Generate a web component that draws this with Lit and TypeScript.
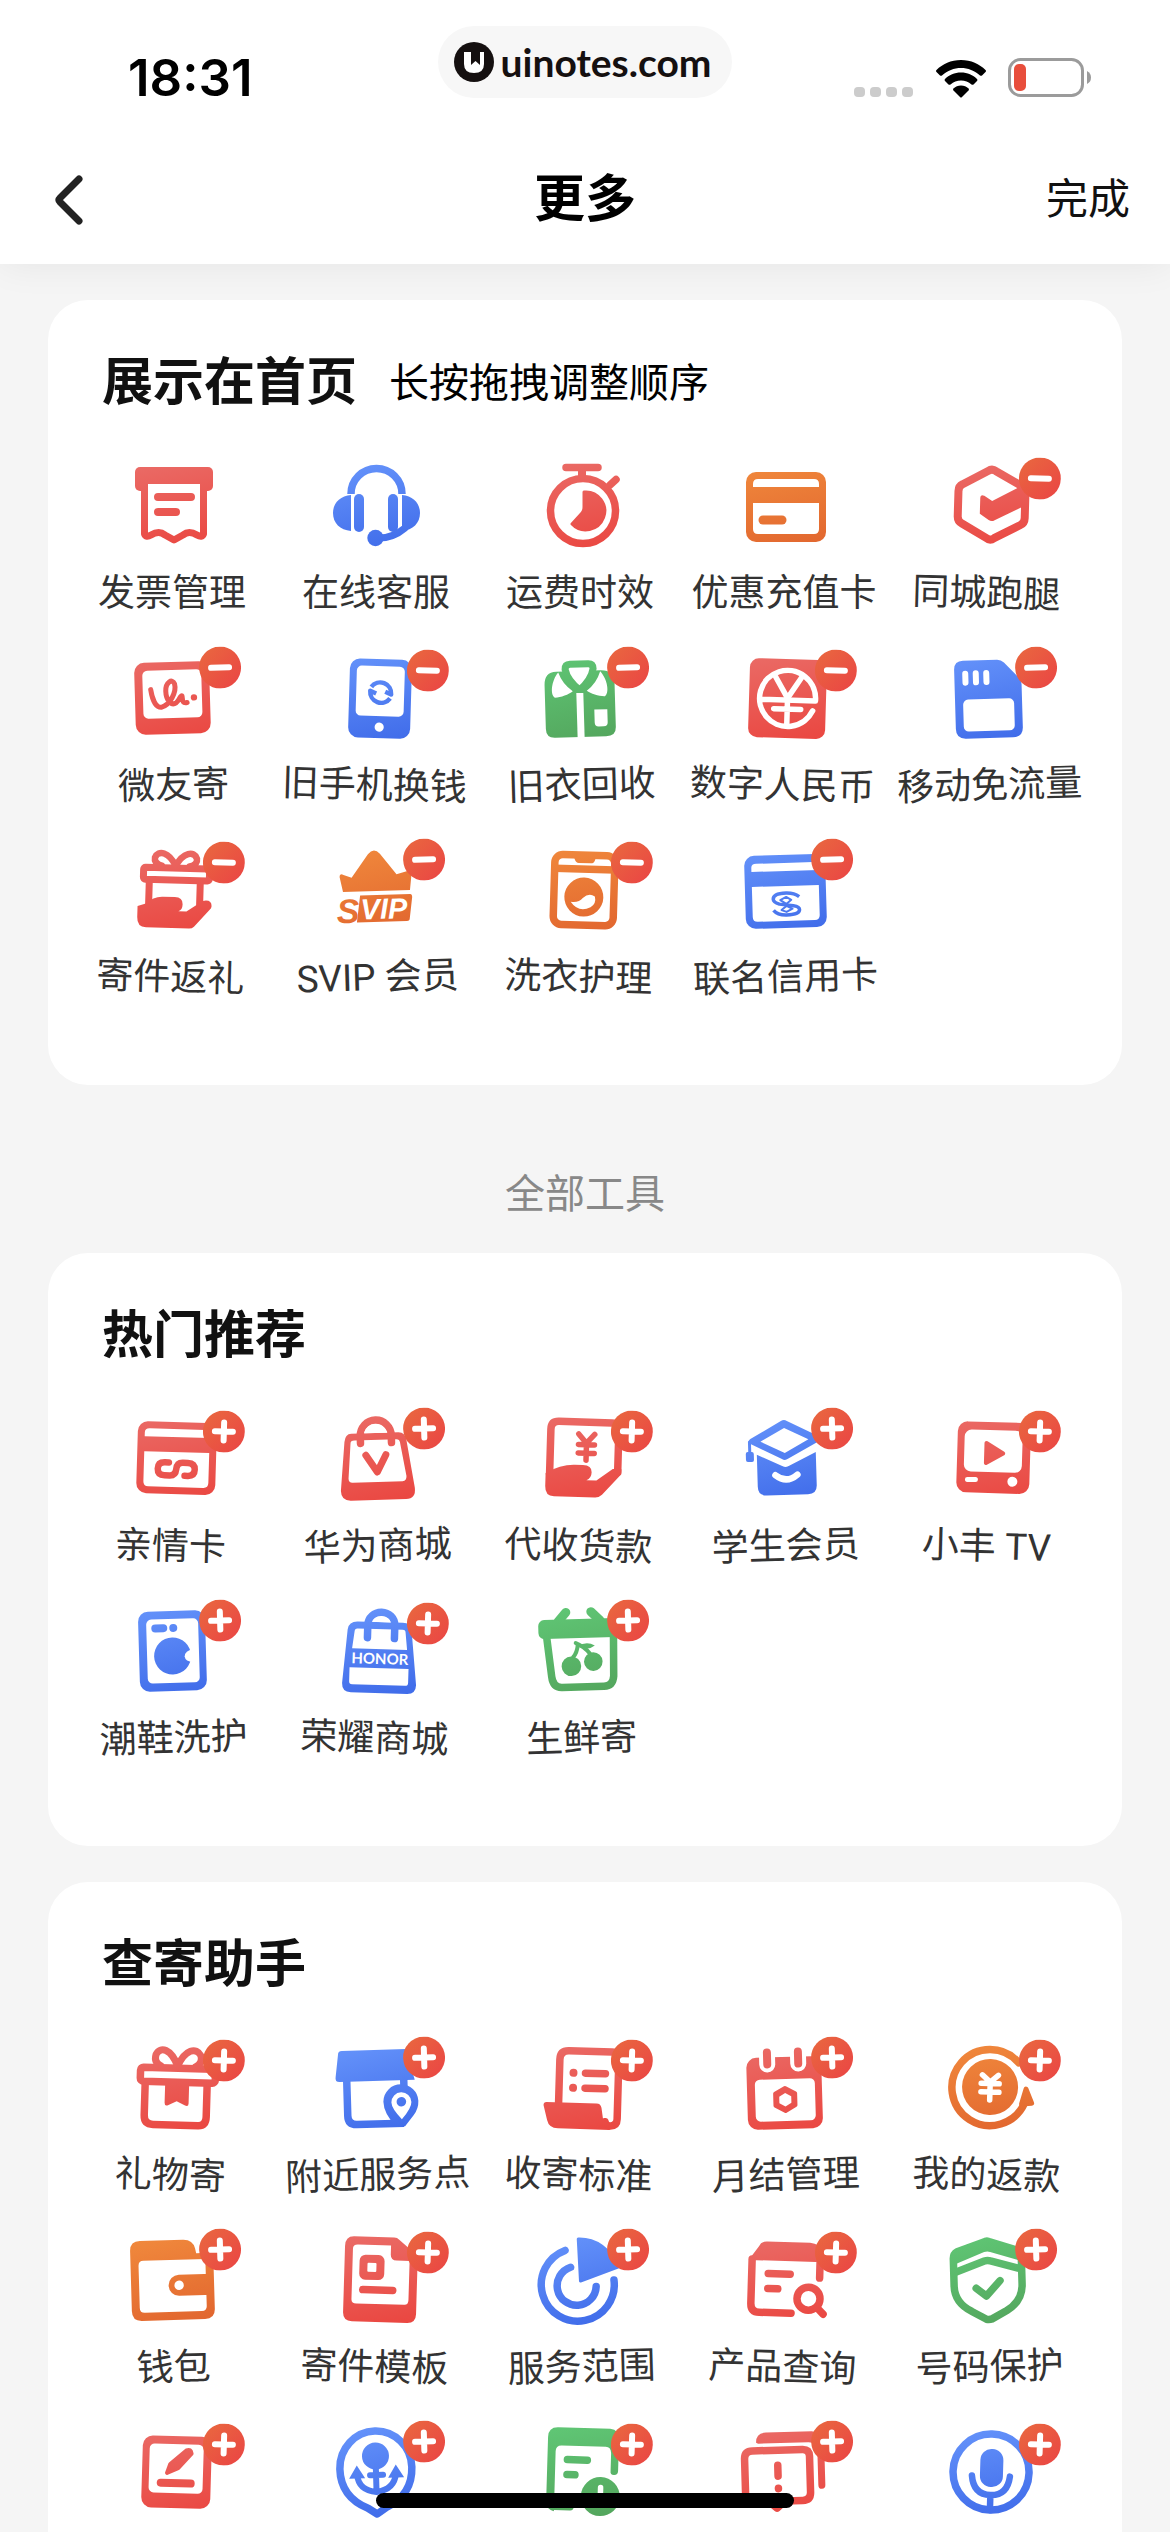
import { LitElement, html, svg, css, TemplateResult, SVGTemplateResult } from "lit";
import { customElement, property } from "lit/decorators.js";
import { classMap } from "lit/directives/class-map.js";

type Tone = "red" | "blue" | "orange" | "green";
type Mode = "fixed" | "remove" | "add";

interface Tool {
  name: string;
  tone: Tone;
  icon: string;
  mode: Mode;
  unlabelled?: boolean;
}

const TONES: Record<Tone, [string, string]> = {
  red: ["#ea6a65", "#ea4842"],
  blue: ["#6492fa", "#416dea"],
  orange: ["#f0883c", "#e2672f"],
  green: ["#5fc574", "#54a75e"],
};

/* Every icon is drawn on an 88 x 88 canvas. The canvas paints both fill and
   stroke with the tone gradient; the classes switch one of them off:
   solid = fill only, line = stroke only, paper = white fill, chalk = white stroke. */
const ICONS: Record<string, SVGTemplateResult> = {
  invoice: svg`
    <rect class="solid" x="7" y="5" width="78" height="24" rx="5"/>
    <rect class="paper" x="20" y="22" width="52" height="12"/>
    <path class="line" stroke-width="7" stroke-linecap="butt" d="M16.5 26V72Q18 76 23 73Q31 68 37 73L46 78L55 73Q61 68 69 73Q74 76 75.5 72V26"/>
    <path class="line" stroke-width="8" d="M30 35H63M30 50H48"/>`,
  headset: svg`
    <path class="line" stroke-width="7.5" stroke-linecap="butt" d="M19 32A25.5 25.5 0 0 1 70 32"/>
    <path class="solid" d="M19 33V69C8 68 1 61 1 51S8 34 19 33ZM70 33V69C81 68 88 61 88 51S81 34 70 33Z"/>
    <rect class="solid" x="22" y="32" width="10" height="38" rx="5"/>
    <rect class="solid" x="56" y="32" width="10" height="38" rx="5"/>
    <path class="line" stroke-width="7" d="M44 76Q60 77 73 66"/>
    <circle class="solid" cx="43.5" cy="76" r="8.2"/>`,
  stopwatch: svg`
    <circle class="line" stroke-width="7.5" cx="47" cy="49" r="32.5"/>
    <path class="line" stroke-width="7.5" d="M30 5.5H62M74 23L80 17.5"/>
    <rect class="solid" x="42" y="6" width="8" height="10"/>
    <path stroke-width="3" d="M48 30A19 19 0 1 1 36 62L46 51Q48 49 48 45Z"/>`,
  prepaid: svg`
    <rect class="solid" x="6" y="10" width="80" height="70" rx="10"/>
    <path class="paper" d="M13 25V22Q13 17 18 17H74Q79 17 79 22V25Z"/>
    <path class="paper" d="M13 41H79V67Q79 72 74 72H18Q13 72 13 67Z"/>
    <path class="line" stroke-width="9" d="M23 58H42"/>`,
  courier: svg`
    <path class="line" stroke-width="8" d="M42 9Q46 6 50 9L76 23Q80 25 80 30V55Q80 60 76 62L50 76Q46 79 42 76L17 62Q13 60 13 55V30Q13 25 17 23Z"/>
    <path class="solid" d="M35 36Q35 32 39 34L47 39L81 20V42L50 58Q47 60 44 58L35 52Z"/>`,
  sketch: svg`
    <rect class="solid" x="8" y="8" width="75" height="72" rx="10"/>
    <rect class="paper" x="16" y="16" width="59" height="48" rx="5"/>
    <path class="line" stroke-width="5" d="M24 35C25 43 28 53 34 53C43 51 50 38 48 30C46 24 39 28 39 37C39 46 44 52 49 49C53 46 53 42 55 42C56 45 54 50 60 49"/>
    <circle class="solid" cx="67" cy="44" r="3.2"/>`,
  phone: svg`
    <rect class="solid" x="16" y="5" width="62" height="79" rx="10"/>
    <rect class="paper" x="23" y="12" width="48" height="50" rx="5"/>
    <circle class="paper" cx="47" cy="73" r="4.6"/>
    <path class="line" stroke-width="4.5" stroke-linecap="butt" d="M38 33A11 11 0 0 1 58 40L52 37.5M57 44A11 11 0 0 1 37 37L43 39.5"/>`,
  shirt: svg`
    <path class="solid" d="M22 17H66Q80 17 80 30V74Q80 83 70 83H19Q10 83 10 74V30Q10 17 22 17Z"/>
    <path class="paper" d="M24 18C17 26 15 40 20 43C26 43 34 40 38 37Q28 30 24 18ZM66 18C73 26 75 40 70 43C64 43 56 40 52 37Q62 30 66 18Z"/>
    <path fill="#fff" stroke-width="7" d="M31 15Q31 10 36 10H54Q59 10 59 15Q57 26 45 36Q33 26 31 15Z"/>
    <rect class="paper" x="41.5" y="39" width="7" height="45"/>
    <path class="paper" d="M59 56H72V69Q72 73 68 73H63Q59 73 59 69Z"/>`,
  digital: svg`
    <rect class="solid" x="8" y="5" width="77" height="79" rx="9"/>
    <path class="chalk" stroke-width="5.5" d="M20 46H74.5A28 28 0 1 0 72 56"/>
    <path class="chalk" stroke-width="5.5" d="M34 23L46.5 44L60 23M46.5 44V72M33 55H60"/>`,
  sdcard: svg`
    <path class="solid" d="M21 6H55Q59 6 62 9L76 24Q79 27 79 31V74Q79 84 69 84H22Q12 84 12 74V15Q12 6 21 6Z"/>
    <path class="chalk" stroke-width="6" d="M23 19V28M33.5 19V28M44 19V28"/>
    <rect class="paper" x="20" y="45" width="51" height="32" rx="5"/>`,
  handgift: svg`
    <path class="line" stroke-width="6.5" d="M46 20C39 6 28 4 25 12Q24 18 32 20M46 20C53 6 64 4 67 12Q68 18 60 20"/>
    <rect class="line" stroke-width="7" x="14" y="22" width="66" height="12" rx="2"/>
    <path class="line" stroke-width="7" d="M20 36V60M71 36V58"/>
    <path class="solid" d="M9 61L18 58Q24 51 34 51H46Q54 51 54 58Q54 64 50 65H58L74 54Q83 52 83 59Q83 61 81 63L66 80Q64 82 61 82H18Q9 82 9 72Z"/>`,
  svip: svg`
    <path class="solid" d="M9 30Q9 26 13 28L21 31L38 8Q44 1 50 8L66 29L77 26Q82 25 81 29L79 45H12Z"/>
    <path class="solid" d="M29 49H79Q81 49 81 52L78 73Q78 76 75 76H25Z"/>
    <text class="solid mark" x="5" y="76" font-size="34">S</text>
    <text class="paper mark" x="29" y="73" font-size="29">VIP</text>`,
  laundry: svg`
    <rect class="line" stroke-width="7.5" x="17" y="9" width="60" height="70" rx="8"/>
    <path class="line" stroke-width="7.5" stroke-linecap="butt" d="M17 23H77"/>
    <path class="solid" d="M33 9Q36 10 37 14Q38 17 41 17H53Q56 17 57 14Q58 10 61 9Z"/>
    <circle class="solid" cx="47" cy="51" r="19.5"/>
    <path class="paper" d="M34 56Q42 57 46 52Q52 46 58 50Q60 57 54 61Q42 67 34 56Z"/>`,
  cobrand: svg`
    <rect class="solid" x="6" y="9" width="81" height="73" rx="10"/>
    <path class="paper" d="M13 25V21Q13 17 18 17H75Q80 17 80 21V25Z"/>
    <path class="paper" d="M13 40H80V70Q80 75 75 75H18Q13 75 13 70Z"/>
    <path class="line" stroke-width="3.5" stroke-linecap="butt" d="M60 51Q55 47 47 47Q34 47 34 53Q34 56 40 58L54 60Q60 61 60 64Q60 69 47 69Q38 69 34 64"/>
    <path class="line" stroke-width="2" d="M41 54L47 51L52 54L47 58ZM42 64L47 60L53 63L47 66Z"/>`,
  family: svg`
    <rect class="solid" x="8" y="7" width="79" height="72" rx="10"/>
    <path class="paper" d="M15 22V18Q15 14 20 14H75Q80 14 80 18V22Z"/>
    <path class="paper" d="M15 37H80V67Q80 72 75 72H20Q15 72 15 67Z"/>
    <path class="line" stroke-width="6.5" d="M40 47.5H36Q29 47.5 29 54Q29 60.5 36 60.5H41Q47 60.5 47.5 54Q48 47.5 54 47.5H59Q66 47.5 66 54Q66 60.5 59 60.5H56"/>`,
  vbag: svg`
    <path class="solid" d="M21 18H68Q75 18 76 26L83 74Q84 85 74 85H19Q9 85 9 75L14 26Q15 18 21 18Z"/>
    <path class="paper" d="M24 25H66Q69 25 69.5 28L75 62Q75 67 71 67H21Q17 67 17 63L20 28Q20 25 24 25Z"/>
    <path class="line" stroke-width="7.5" d="M30 28V21A15.5 16 0 0 1 61 21V28"/>
    <path class="paper" d="M34 18V17Q37 9 45 9T57 17V18Z"/>
    <path class="line" stroke-width="7" d="M35 40L46 57L55 40"/>`,
  collect: svg`
    <path class="line" stroke-width="7.5" d="M13 60V15Q13 7 21 7H74Q81 7 81 14V56"/>
    <path class="solid" d="M9 59Q24 50 38 50H46Q55 50 55 57Q55 63 50 65H60L76 53H84.7V58L66 79Q63 82 59 82H18Q9 82 9 72Z"/>
    <path class="line" stroke-width="5.5" d="M41 19L49 28L57 19M49 28V45M41 29.5H57M41 38H57"/>`,
  student: svg`
    <path class="solid" d="M43 6Q46 4 49 6L80 22Q82 25 79 28L49 44Q46 46 43 44L12 28Q9 25 12 23ZM22 26L46 38L70 25L46 13Z" fill-rule="evenodd"/>
    <path class="line" stroke-width="3" d="M11 26V40"/>
    <rect class="solid" x="7" y="36" width="8" height="10" rx="2"/>
    <path class="solid" d="M18 39L43 51Q47 53 50 51L77 38V71Q77 80 68 80H27Q18 80 18 71Z"/>
    <path class="chalk" stroke-width="6.5" d="M36 60Q47 69 58 60"/>`,
  tv: svg`
    <rect class="solid" x="12" y="7" width="73" height="71" rx="10"/>
    <rect class="paper" x="19" y="15" width="58" height="42" rx="7"/>
    <path stroke-width="4" d="M41 28L58 38L41 48Z"/>
    <path class="chalk" stroke-width="5" d="M23 65H31"/>
    <circle class="paper" cx="68" cy="66" r="5"/>`,
  shoewash: svg`
    <rect class="solid" x="12" y="4" width="67" height="80" rx="10"/>
    <rect class="paper" x="20" y="12" width="52" height="64" rx="5"/>
    <path class="line" stroke-width="8" d="M29 21H37"/>
    <circle class="solid" cx="47" cy="21" r="4"/>
    <circle class="solid" cx="45.5" cy="49" r="18.5"/>
    <path class="paper" d="M66 43Q58 44 57.5 50Q58 55 66 56Z"/>`,
  honor: svg`
    <path class="solid" d="M24 15H69Q77 15 78 23L84 77Q84 86 75 86H19Q10 86 10 77L14 23Q15 15 24 15Z"/>
    <path class="paper" d="M24 22H69Q72 22 72 25L74 42H19L21 25Q21 22 24 22Z"/>
    <path class="paper" d="M17 61H76V75Q76 78 73 78H20Q17 78 17 75Z"/>
    <path class="line" stroke-width="7.5" d="M34 31V18A13.5 13 0 0 1 61 18V31"/>
    <path class="paper" d="M38 15Q40 9 47.5 9T57 15Z"/>
    <text class="paper shop" x="47" y="57" font-size="15" text-anchor="middle">HONOR</text>`,
  basket: svg`
    <path class="line" stroke-width="9" d="M32 5L24 14M57 5L66 14"/>
    <rect class="solid" x="4" y="12" width="82" height="19" rx="6"/>
    <path class="line" stroke-width="7.5" stroke-linecap="butt" d="M12 28L16 69Q17 80 26 80H68Q77 80 78 70L79 28"/>
    <circle class="solid" cx="36" cy="59" r="9.8"/>
    <circle class="solid" cx="58" cy="55" r="9.3"/>
    <path class="line" stroke-width="4" d="M38 50Q42 46 43 38M55 47Q50 40 41 36"/>
    <path class="solid" d="M43 39Q52 34 60 39Q52 45 43 39Z"/>`,
  gift: svg`
    <path class="line" stroke-width="7" d="M48 22C41 5 30 2 26 11Q24 19 31 22M48 22C55 5 66 2 71 11Q73 19 66 22"/>
    <rect class="line" stroke-width="7.5" x="11" y="24" width="75" height="14" rx="3"/>
    <path class="line" stroke-width="7.5" d="M16 40V72Q16 81 25 81H70Q78 81 78 72V40"/>
    <path class="solid" d="M36 40H60V59Q60 63 56 61L48 57L40 61Q36 63 36 59Z"/>`,
  store: svg`
    <path class="line" stroke-width="7.5" stroke-linecap="butt" d="M16 34V71Q16 80 25 80H72M73 34V46"/>
    <path class="solid" d="M12 6H76L84 37H9Q4 37 5 32L8 10Q8 6 12 6Z"/>
    <path class="solid" d="M70 41A17.5 17.5 0 0 1 87 58Q87 66 82 72L73 83H64Q52 70 52 58A17.5 17.5 0 0 1 70 41Z"/>
    <path class="paper" d="M70 49A10 10 0 0 1 80 59Q80 65 70 76Q60 65 60 59A10 10 0 0 1 70 49Z"/>
    <circle class="solid" cx="70" cy="58.5" r="4.8"/>`,
  standard: svg`
    <path class="line" stroke-width="7.5" d="M22 60V16Q22 7 31 7H74Q81 7 81 14V74Q81 81 74 81Q70 81 69 77"/>
    <path class="solid" d="M7 62Q7 59 10 59H60Q64 59 65 63L67 75Q68 80 74 81V85H22Q13 85 11 77Z"/>
    <circle class="solid" cx="36" cy="29" r="4"/>
    <circle class="solid" cx="36" cy="44" r="4"/>
    <path class="line" stroke-width="7.5" d="M48 29H68M48 44H68"/>`,
  calendar: svg`
    <rect class="solid" x="8" y="13" width="75" height="72" rx="10"/>
    <rect class="paper" x="16" y="35" width="60" height="42" rx="5"/>
    <path class="chalk" stroke-width="16" d="M29 7V20M60 7V20"/>
    <path class="line" stroke-width="8" d="M29 8V20M60 8V20"/>
    <path stroke-width="4" d="M46 44L56 49.5V61.5L46 67L36 61.5V49.5Z"/>
    <path class="paper" d="M46 49L52 52.5V59L46 62.5L40 59V52.5Z"/>`,
  refund: svg`
    <path class="line" stroke-width="7.5" d="M73 18A38 38 0 1 0 80 58"/>
    <path stroke-width="5" d="M81 44L87 58L77 59Z"/>
    <circle class="solid" cx="45" cy="43" r="28"/>
    <path class="chalk" stroke-width="5.5" d="M37 31L45 38L53 31M45 38V56M36 39.5H54M36 48H54"/>`,
  wallet: svg`
    <path class="solid" d="M14 4H57Q67 4 69 13L70 18H77Q87 19 87 29V74Q87 84 77 84H14Q4 84 4 74V14Q4 4 14 4Z"/>
    <path class="paper" d="M17 24H79V71Q79 76 74 76H17Q12 76 12 71V29Q12 24 17 24Z"/>
    <path class="solid" d="M86 39H52A10.5 10.5 0 0 0 52 60H86Z"/>
    <circle class="paper" cx="52" cy="49.5" r="4.7"/>`,
  template: svg`
    <path class="solid" d="M20 1H60Q63 1 65 3L82 17Q84 19 84 22V77Q84 86 75 86H20Q11 86 11 77V11Q11 1 20 1Z"/>
    <path class="paper" d="M24 9H57V18Q57 24 63 24H76V63Q76 68 72 68H24Q19 68 19 64V13Q19 9 24 9Z"/>
    <rect class="solid" x="26" y="19" width="25" height="25" rx="6"/>
    <rect class="paper" x="34" y="27" width="9" height="9" rx="1"/>
    <path class="line" stroke-width="7.5" d="M30 54H60"/>`,
  range: svg`
    <path stroke-width="3" d="M44.5 3Q70 3 84 32L45.5 45Z"/>
    <path class="line" stroke-width="7.5" d="M31 14A36.5 36.5 0 1 0 79 45"/>
    <path class="line" stroke-width="7.5" d="M36 31A19.5 19.5 0 1 0 61 51"/>`,
  query: svg`
    <path class="solid" d="M17 11Q19 6 25 6H68Q78 7 80 13L82 25H7Z"/>
    <path class="line" stroke-width="7.5" d="M10.5 24V68Q10.5 77 19 77H51M78.5 22V41"/>
    <path class="line" stroke-width="7.5" d="M27 38H49M27 53H37"/>
    <circle class="line" stroke-width="7.5" cx="68" cy="62" r="11.5"/>
    <path class="line" stroke-width="7.5" d="M77 71L83 77"/>`,
  shield: svg`
    <path class="line" stroke-width="7.5" d="M42 6Q45 4 48 6L75 15Q79 17 79 22V49Q79 66 63 75L48 83Q45 84 42 83L28 75Q11 66 11 49V22Q11 17 15 15Z"/>
    <path class="solid" d="M11 18L45 4L79 18V26L48 16Q45 15 42 16L11 28Z"/>
    <path class="line" stroke-width="7.5" stroke-linecap="butt" d="M11 36L42 25Q45 24 48 25L79 34"/>
    <path class="line" stroke-width="7.5" d="M33 52L43 60L57 45"/>`,
  edit: svg`
    <rect class="solid" x="13" y="8" width="69" height="72" rx="10"/>
    <rect class="paper" x="20" y="16" width="54" height="49" rx="5"/>
    <path stroke-width="4" d="M57 22Q61 20 62 25L49 40L38 45L41 36Z"/>
    <path class="line" stroke-width="8" d="M32 55H62"/>`,
  port: svg`
    <path class="line" stroke-width="7.5" d="M36 80Q9 68 9 40A36 37 0 0 1 81 40Q81 68 54 80L45 86Z"/>
    <circle class="solid" cx="45" cy="28" r="13.5"/>
    <path class="line" stroke-width="6" d="M45 36V62M39 47H52M26 46Q27 62 45 64Q63 62 65 46"/>
    <path class="solid" d="M26 37L34 50H18ZM65 37L73 50H57Z"/>`,
  record: svg`
    <path class="solid" d="M20 0H72Q81 1 81 10V42Q81 46 77 46T73.5 42V24Q73 18 68 18H24Q18 18 18 24V84Q10 82 10 75V10Q10 0 20 0Z"/>
    <path class="line" stroke-width="7.5" d="M30 32H50M30 47H38M18 79H34"/>
    <circle class="solid" cx="64" cy="68" r="19.5"/>
    <path class="chalk" stroke-width="5.5" d="M64 59V69H70"/>`,
  alert: svg`
    <path class="solid" d="M18 14Q18 4 28 4H74Q84 5 86 16V58Q86 62 82.5 62T79 58V24Q79 15 70 15H20Z"/>
    <path class="line" stroke-width="7.5" d="M14 22H64Q71 22 71 29V65Q71 73 63 73H45L37 80L29 73H14Q6 73 6 65V30Q6 22 14 22Z"/>
    <path class="line" stroke-width="7.5" d="M39 37V48M39 60V60.5"/>`,
  voice: svg`
    <circle class="line" stroke-width="7.5" cx="46" cy="44" r="38"/>
    <rect class="solid" x="35" y="21" width="23" height="38" rx="11"/>
    <path class="line" stroke-width="6.5" d="M27 48Q29 67 46 67T65 48M46 68V82"/>`,
};

@customElement("tool-tile")
class ToolTile extends LitElement {
  @property({ attribute: false }) tool!: Tool;
  @property({ type: Boolean }) tilted = false;
  @property({ type: Boolean }) counter = false;

  static styles = css`
    :host {
      display: block;
    }
    .tile {
      width: 100%;
      display: flex;
      flex-direction: column;
      align-items: center;
      gap: 18px;
      padding: 0;
      border: 0;
      background: none;
      color: #333;
      font-family: Roboto, "Noto Sans CJK SC", sans-serif;
      font-size: 37px;
      line-height: 52px;
      white-space: nowrap;
      cursor: pointer;
    }
    .tilted {
      transform: rotate(1.7deg);
    }
    .counter {
      transform: rotate(-1.7deg);
    }
    .art {
      position: relative;
      width: 88px;
      height: 88px;
    }
    .icon {
      display: block;
      width: 88px;
      height: 88px;
      overflow: visible;
    }
    .badge {
      position: absolute;
      left: 73px;
      top: -6px;
      width: 42px;
      height: 42px;
    }
    .label {
      height: 52px;
    }
    .solid {
      stroke: none;
    }
    .line {
      fill: none;
    }
    .paper {
      fill: #fff;
      stroke: none;
    }
    .chalk {
      fill: none;
      stroke: #fff;
    }
    .mark {
      font-family: "Liberation Sans Narrow", "Liberation Sans", sans-serif;
      font-weight: 700;
      font-style: italic;
    }
    .shop {
      font-family: Lato, sans-serif;
      font-weight: 700;
    }
  `;

  private badge(mode: Mode): TemplateResult | string {
    if (mode === "fixed") return "";
    return html`<svg class="badge" viewBox="0 0 42 42" aria-hidden="true">
      <defs>
        <linearGradient id="dot" x1="0" y1="0" x2="1" y2="1">
          <stop offset="0" stop-color="#e9693f"></stop>
          <stop offset="1" stop-color="#ea4444"></stop>
        </linearGradient>
      </defs>
      <circle cx="21" cy="21" r="21" fill="url(#dot)"></circle>
      <path
        d=${mode === "add" ? "M12 21H30M21 12V30" : "M12 21H30"}
        stroke="#fff"
        stroke-width="6"
        stroke-linecap="round"
      ></path>
    </svg>`;
  }

  render() {
    const { name, tone, icon, mode, unlabelled } = this.tool;
    const [from, to] = TONES[tone];
    return html`<button
      type="button"
      class=${classMap({ tile: true, tilted: this.tilted, counter: this.counter })}
      aria-label=${name}
    >
      <span class="art">
        <svg
          class="icon"
          viewBox="0 0 88 88"
          fill="url(#tone)"
          stroke="url(#tone)"
          stroke-linecap="round"
          stroke-linejoin="round"
          aria-hidden="true"
        >
          <defs>
            <linearGradient id="tone" gradientUnits="userSpaceOnUse" x1="30" y1="0" x2="50" y2="88">
              <stop offset="0" stop-color=${from}></stop>
              <stop offset="1" stop-color=${to}></stop>
            </linearGradient>
          </defs>
          ${ICONS[icon]}
        </svg>
        ${this.badge(mode)}
      </span>
      <span class="label">${unlabelled ? "" : name}</span>
    </button>`;
  }
}

const tool = (name: string, tone: Tone, icon: string, mode: Mode): Tool => ({ name, tone, icon, mode });

const HOME: Tool[] = [
  tool("发票管理", "red", "invoice", "fixed"),
  tool("在线客服", "blue", "headset", "fixed"),
  tool("运费时效", "red", "stopwatch", "fixed"),
  tool("优惠充值卡", "orange", "prepaid", "fixed"),
  tool("同城跑腿", "red", "courier", "remove"),
  tool("微友寄", "red", "sketch", "remove"),
  tool("旧手机换钱", "blue", "phone", "remove"),
  tool("旧衣回收", "green", "shirt", "remove"),
  tool("数字人民币", "red", "digital", "remove"),
  tool("移动免流量", "blue", "sdcard", "remove"),
  tool("寄件返礼", "red", "handgift", "remove"),
  tool("SVIP 会员", "orange", "svip", "remove"),
  tool("洗衣护理", "orange", "laundry", "remove"),
  tool("联名信用卡", "blue", "cobrand", "remove"),
];

const HOT: Tool[] = [
  tool("亲情卡", "red", "family", "add"),
  tool("华为商城", "red", "vbag", "add"),
  tool("代收货款", "red", "collect", "add"),
  tool("学生会员", "blue", "student", "add"),
  tool("小丰 TV", "red", "tv", "add"),
  tool("潮鞋洗护", "blue", "shoewash", "add"),
  tool("荣耀商城", "blue", "honor", "add"),
  tool("生鲜寄", "green", "basket", "add"),
];

const HELPER: Tool[] = [
  tool("礼物寄", "red", "gift", "add"),
  tool("附近服务点", "blue", "store", "add"),
  tool("收寄标准", "red", "standard", "add"),
  tool("月结管理", "red", "calendar", "add"),
  tool("我的返款", "orange", "refund", "add"),
  tool("钱包", "orange", "wallet", "add"),
  tool("寄件模板", "red", "template", "add"),
  tool("服务范围", "blue", "range", "add"),
  tool("产品查询", "red", "query", "add"),
  tool("号码保护", "green", "shield", "add"),
  { name: "编辑", tone: "red", icon: "edit", mode: "add", unlabelled: true },
  { name: "港口", tone: "blue", icon: "port", mode: "add", unlabelled: true },
  { name: "记录", tone: "green", icon: "record", mode: "add", unlabelled: true },
  { name: "提醒", tone: "red", icon: "alert", mode: "add", unlabelled: true },
  { name: "语音", tone: "blue", icon: "voice", mode: "add", unlabelled: true },
];

@customElement("app-root")
class AppRoot extends LitElement {
  static styles = css`
    :host {
      display: flex;
      flex-direction: column;
      position: relative;
      height: 100vh;
      overflow: hidden;
      background: #f5f5f5;
      color: #111;
      font-family: "Liberation Sans", "Noto Sans CJK SC", sans-serif;
    }
    .top {
      position: relative;
      z-index: 1;
      background: #fff;
      box-shadow: 0 0 36px rgba(0, 0, 0, 0.07);
    }
    .status {
      display: grid;
      grid-template-columns: 1fr auto 1fr;
      align-items: start;
      height: 132px;
      color: #000;
    }
    .time {
      padding: 52px 0 0 128px;
      font-family: Inter, sans-serif;
      font-weight: 600;
      font-size: 51px;
      line-height: 52px;
    }
    .pill {
      display: flex;
      align-items: center;
      gap: 6px;
      height: 72px;
      margin-top: 26px;
      padding: 0 20px 0 16px;
      border-radius: 36px;
      box-sizing: border-box;
      background: #f7f7f7;
      color: #151010;
      font-family: Lato, sans-serif;
      font-weight: 700;
      font-size: 39px;
      line-height: 48px;
    }
    .brand {
      width: 40px;
      height: 40px;
    }
    .signals {
      display: flex;
      justify-content: flex-end;
      align-items: flex-end;
      gap: 22px;
      padding: 58px 78px 0 0;
    }
    .signals svg {
      display: block;
    }
    .nav {
      display: grid;
      grid-template-columns: 1fr auto 1fr;
      align-items: center;
      height: 132px;
      padding: 4px 40px 0;
      box-sizing: border-box;
    }
    .back,
    .done {
      padding: 0;
      border: 0;
      background: none;
      color: #111;
      font: inherit;
      cursor: pointer;
    }
    .back {
      justify-self: start;
      width: 48px;
      height: 52px;
    }
    .back svg {
      display: block;
    }
    .done {
      justify-self: end;
      font-size: 42px;
      line-height: 60px;
    }
    .heading {
      margin: 0;
      color: #000;
      font-weight: 700;
      font-size: 51px;
      line-height: 72px;
    }
    .content {
      flex: 1;
      min-height: 0;
      overflow-y: auto;
      scrollbar-width: none;
      padding: 36px 48px 0;
    }
    .card {
      border-radius: 40px;
      background: #fff;
      padding: 46px 32px 81px 22px;
    }
    .card + .card {
      margin-top: 36px;
    }
    .caption {
      display: flex;
      align-items: center;
      gap: 32px;
      height: 74px;
      margin-bottom: 42px;
      padding-left: 32px;
    }
    .title {
      margin: 0;
      font-weight: 700;
      font-size: 51px;
      line-height: 74px;
    }
    .hint {
      margin: 0;
      color: #000;
      font-size: 40px;
      line-height: 56px;
    }
    .grid {
      display: grid;
      grid-template-columns: repeat(5, minmax(0, 1fr));
      row-gap: 34px;
    }
    .divider {
      margin: 0;
      padding: 80px 0 30px;
      color: #888;
      font-weight: 400;
      font-size: 40px;
      line-height: 58px;
      text-align: center;
    }
    .home-bar {
      position: absolute;
      z-index: 2;
      left: 50%;
      bottom: 24px;
      width: 418px;
      height: 15px;
      margin-left: -209px;
      border-radius: 8px;
      background: #000;
    }
  `;

  private card(title: string, tools: Tool[], hint = ""): TemplateResult {
    return html`<section class="card">
      <div class="caption">
        <h2 class="title">${title}</h2>
        ${hint ? html`<p class="hint">${hint}</p>` : ""}
      </div>
      <div class="grid">
        ${tools.map(
          (item, i) => html`<tool-tile
            .tool=${item}
            ?tilted=${item.mode !== "fixed" && i % 2 === 0}
            ?counter=${item.mode !== "fixed" && i % 2 === 1}
          ></tool-tile>`
        )}
      </div>
    </section>`;
  }

  render() {
    return html`
      <header class="top">
        <div class="status">
          <div class="time">18:31</div>
          <div class="pill">
            <svg class="brand" viewBox="0 0 40 40" aria-hidden="true">
              <circle cx="20" cy="20" r="20" fill="#151010"></circle>
              <path fill="#fff" d="M10 10H17V23L21.5 19L26 23V10H30V22Q30 31 20 31T10 22Z"></path>
            </svg>
            <span>uinotes.com</span>
          </div>
          <div class="signals">
            <svg width="60" height="38" viewBox="0 0 60 38" fill="#ccc" aria-hidden="true">
              <rect x="0" y="27" width="11" height="10" rx="4"></rect>
              <rect x="16" y="27" width="11" height="10" rx="4"></rect>
              <rect x="32" y="27" width="11" height="10" rx="4"></rect>
              <rect x="48" y="27" width="11" height="10" rx="4"></rect>
            </svg>
            <svg width="50" height="38" viewBox="0 0 50 38" aria-hidden="true">
              <path d="M25 0C35 0 43.5 4 49.5 10Q50.5 11 49.5 12L46 15.5Q45 16 44 15.5C38.5 10.5 32 8 25 8S11.5 10.5 6 15.5Q5 16 4 15.5L0.5 12Q-0.5 11 0.5 10C6.5 4 15 0 25 0Z"></path>
              <path d="M25 12.5C31.5 12.5 37 15 41 19Q42 20 41 21L37.5 24.5Q36.5 25 35.5 24.5C32.5 22 29 20.5 25 20.5S17.5 22 14.5 24.5Q13.5 25 12.5 24.5L9 21Q8 20 9 19C13 15 18.5 12.5 25 12.5Z"></path>
              <path d="M25 25.5C28 25.5 30.5 26.5 32.5 28.5Q33.5 29.5 32.5 30.5L26 37Q25 38 24 37L17.5 30.5Q16.5 29.5 17.5 28.5C19.5 26.5 22 25.5 25 25.5Z"></path>
            </svg>
            <svg width="84" height="40" viewBox="0 0 84 40" aria-hidden="true">
              <rect x="1.5" y="1.5" width="73" height="36" rx="11" fill="#fff" stroke="#9b9b9b" stroke-width="3"></rect>
              <path d="M79 13Q83 15 83 19.5T79 26Z" fill="#9b9b9b"></path>
              <rect x="6" y="6" width="12" height="27" rx="5" fill="#e84e3c"></rect>
            </svg>
          </div>
        </div>
        <nav class="nav">
          <button class="back" type="button" aria-label="返回">
            <svg width="48" height="52" viewBox="0 0 48 52" fill="none" stroke="#222" stroke-width="7" stroke-linecap="round" stroke-linejoin="round" aria-hidden="true">
              <path d="M39 5L20 24Q18 26 20 28L39 47"></path>
            </svg>
          </button>
          <h1 class="heading">更多</h1>
          <button class="done" type="button">完成</button>
        </nav>
      </header>
      <main class="content">
        ${this.card("展示在首页", HOME, "长按拖拽调整顺序")}
        <h2 class="divider">全部工具</h2>
        ${this.card("热门推荐", HOT)} ${this.card("查寄助手", HELPER)}
      </main>
      <div class="home-bar"></div>
    `;
  }
}
